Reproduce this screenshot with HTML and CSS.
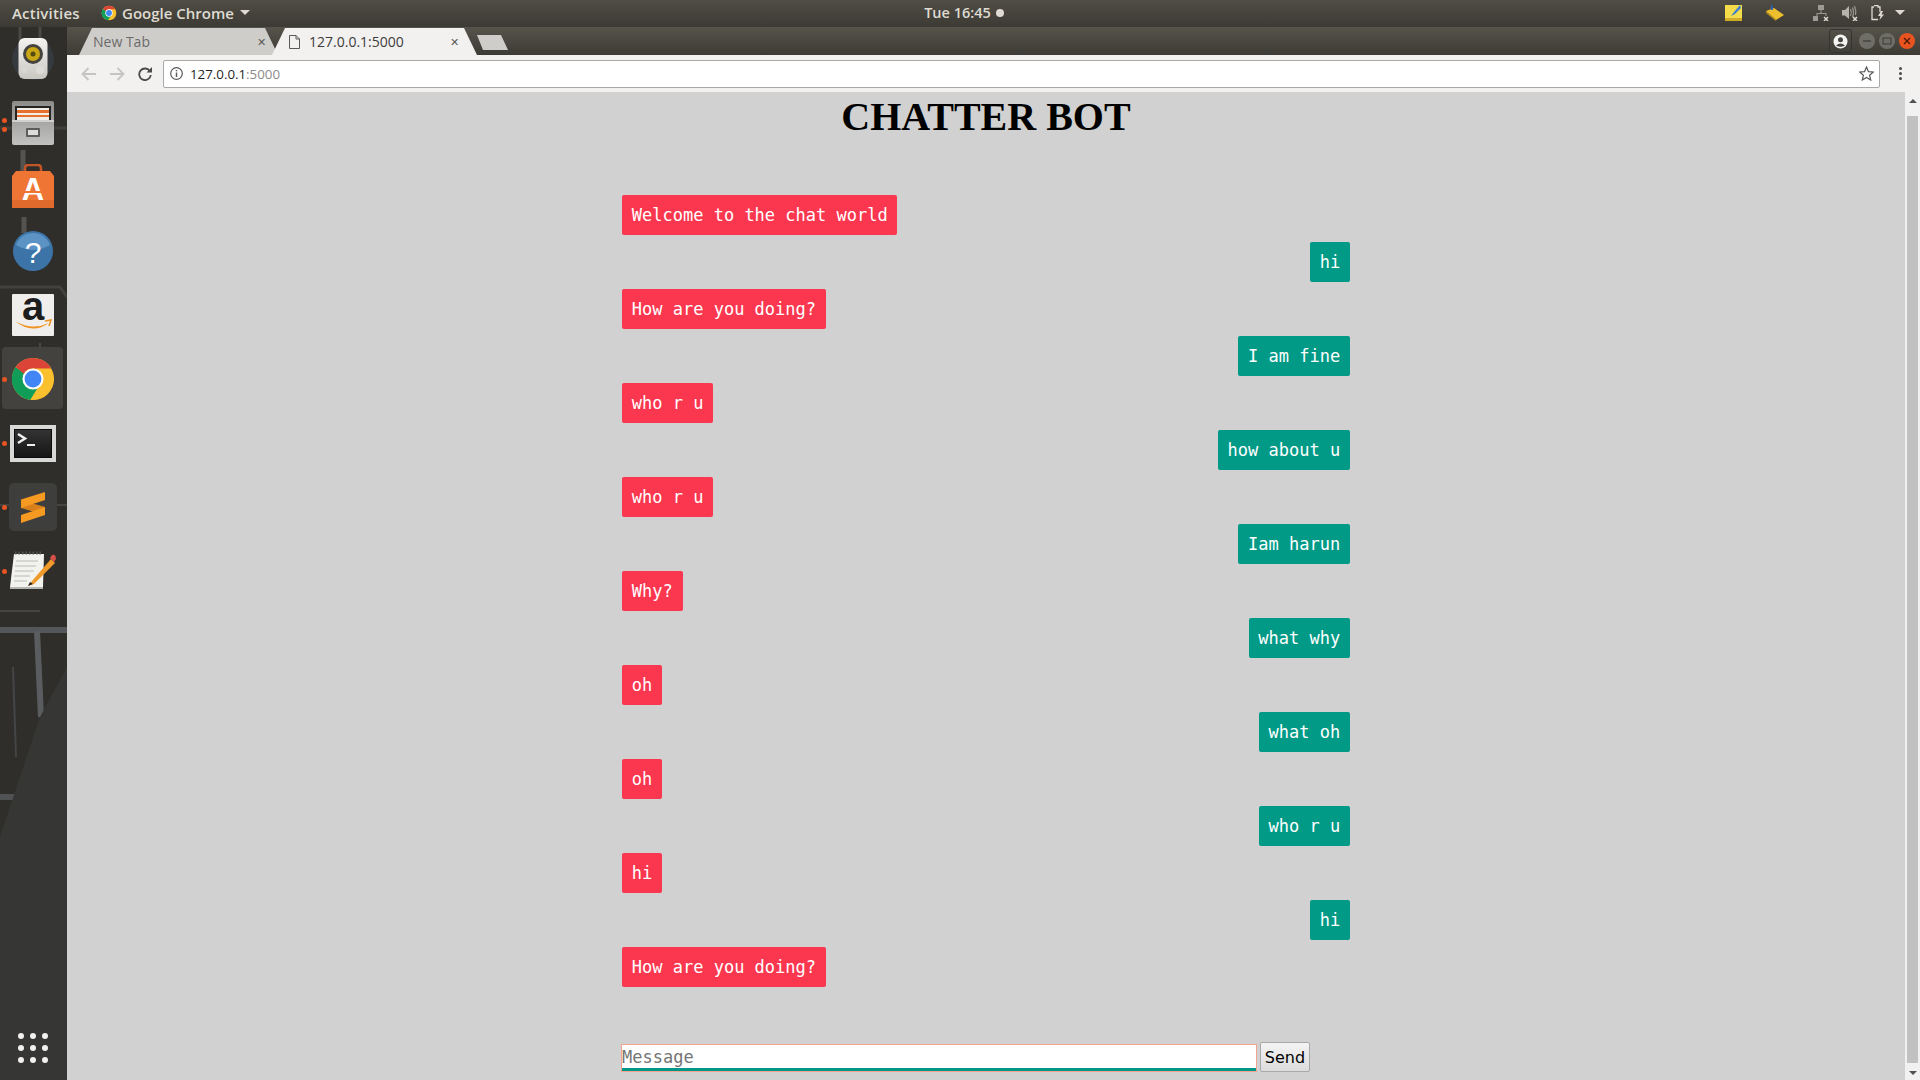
FILE: index.html
```html
<!DOCTYPE html>
<html lang="en">
<head>
    <meta charset="UTF-8">
    <title>127.0.0.1:5000</title>
    <link rel="stylesheet" href="styles.css">
</head>
<body>
    <svg class="defs" width="0" height="0">
        <linearGradient id="metal" x1="0" y1="0" x2="0" y2="1">
            <stop offset="0" stop-color="#8c8c8b"/>
            <stop offset="1" stop-color="#c2c2c1"/>
        </linearGradient>
        <linearGradient id="screen" x1="0" y1="0" x2="0" y2="1">
            <stop offset="0" stop-color="#333"/>
            <stop offset="1" stop-color="#161616"/>
        </linearGradient>
        <linearGradient id="shell" x1="0" y1="0" x2="0" y2="1">
            <stop offset="0" stop-color="#f4f3f0"/>
            <stop offset="1" stop-color="#c9c8c3"/>
        </linearGradient>
        <symbol id="chrome" viewBox="0 0 48 48">
            <circle cx="24" cy="24" r="22" fill="#fbc02d"/>
            <path d="M5.900 11.400 A22 22 0 0 0 21 45.800 L31 30 L17 18 Z" fill="#0f9d58"/>
            <path d="M24 2 A22 22 0 0 1 43.050 13 H24 A11 11 0 0 0 14.400 18.600 L5.900 11.400 A22 22 0 0 1 24 2 Z" fill="#db4437"/>
            <circle cx="24" cy="24" r="11" fill="#fff"/>
            <circle cx="24" cy="24" r="8.800" fill="#4285f4"/>
        </symbol>
    </svg>

    <header class="panel">
        <div class="panel-left">
            <span class="activities">Activities</span>
            <svg class="panel-chrome" width="16" height="16"><use href="#chrome"/></svg>
            <span>Google Chrome</span>
            <span class="caret"></span>
        </div>
        <div class="clock">Tue 16:45<span class="clock-dot"></span></div>
        <div class="tray">
            <svg class="tray-note" width="17" height="17" viewBox="0 0 17 17">
                <rect width="17" height="16" y="1" fill="#f5dc4a"/>
                <rect width="17" height="3" y="14" fill="#d0ab25"/>
                <path d="M15 1 L9 8 L6 12 L10 10 L16 4 Z" fill="#3f7fd0"/>
            </svg>
            <svg class="tray-folder" width="18" height="17" viewBox="0 0 18 17">
                <path d="M0 7 L8 4 L18 11 L10 16 Z" fill="#eebf2d"/>
                <path d="M0 7 L10 16 L10 17 L0 9 Z" fill="#b98e1c"/>
                <path d="M5 1 L6 0 L7 6 L5 6 Z" fill="#2f66b8"/>
            </svg>
            <svg class="tray-net" width="16" height="16" viewBox="0 0 16 16" fill="#9c9a93">
                <rect x="5" y="0" width="6" height="5"/>
                <rect x="0" y="11" width="5" height="5"/>
                <path d="M7.500 5 h1 v3 h5 v3 h-1 v-2 h-8 v2 h-1 v-3 h4 Z"/>
                <path d="M11 12 l4 4 M15 12 l-4 4" stroke="#dfdbd2" stroke-width="1.500"/>
            </svg>
            <svg class="tray-vol" width="16" height="16" viewBox="0 0 16 16" fill="none" stroke="#9c9a93">
                <path d="M0 5 H3 L7 1 V14 L3 10.500 H0 Z" fill="#b5b3ac" stroke="none"/>
                <path d="M8.500 4 Q10 7.500 8.500 11 M10.500 2.500 Q12.500 7.500 10.500 12 M12.500 1 Q14.500 6 13.500 10" stroke-width="1.200"/>
                <path d="M11 12 l4 4 M15 12 l-4 4" stroke="#dfdbd2" stroke-width="1.500"/>
            </svg>
            <svg class="tray-bat" width="14" height="16" viewBox="0 0 14 16" fill="none">
                <path d="M3 0.500 H7 V2 H9 V7 M7 14.500 H1 V2 H3" stroke="#dfdbd2" stroke-width="1.300"/>
                <path d="M10 6 L7 11 H9.500 L8.500 15 L13 9.500 H10.500 L12 6 Z" fill="#dfdbd2"/>
            </svg>
            <span class="caret"></span>
        </div>
    </header>

    <div class="desktop">
        <nav class="dock">
            <svg class="wallpaper" width="67" height="1053" viewBox="0 0 67 1053" fill="none">
                <path d="M20 0 V14 M40 0 V14" stroke="#4a4946" stroke-width="3"/>
                <path d="M0 101 H67" stroke="#403f3c" stroke-width="3"/>
                <path d="M23 123 V150 M24 190 V206" stroke="#55534f" stroke-width="5"/>
                <path d="M0 260 H60 L67 270" stroke="#42413e" stroke-width="3"/>
                <path d="M40 316 V345" stroke="#494845" stroke-width="2"/>
                <path d="M0 478 H67 M0 584 H40" stroke="#454441" stroke-width="2"/>
                <path d="M0 603 H67" stroke="#54575a" stroke-width="6"/>
                <path d="M37 604 L41 690" stroke="#5a5d60" stroke-width="6"/>
                <path d="M13 640 L16 730" stroke="#434547" stroke-width="2"/>
                <path d="M0 770 H15" stroke="#505254" stroke-width="6"/>
                <path d="M67 640 L40 690 L0 810 V1053 H67 Z" fill="#363634" stroke="none"/>
            </svg>

            <div class="dock-slot">
                <svg width="42" height="44" viewBox="0 0 42 44">
                    <circle cx="21" cy="22" r="21" fill="#3b4a55" opacity=".45"/>
                    <rect x="6.500" y="1" width="29" height="41" rx="6" fill="url(#shell)"/>
                    <circle cx="21" cy="17" r="10" fill="#45433e"/>
                    <circle cx="21" cy="17" r="7" fill="#c9a614"/>
                    <circle cx="21" cy="17" r="2.500" fill="#554a10"/>
                    <circle cx="12" cy="33" r="3" fill="#d8d7d3"/>
                    <circle cx="28" cy="33" r="4" fill="#dedcd8"/>
                </svg>
            </div>
            <div class="dock-slot">
                <span class="run-dot run-dot-a"></span><span class="run-dot run-dot-b"></span>
                <svg width="42" height="44" viewBox="0 0 42 44">
                    <rect width="42" height="44" rx="2" fill="url(#metal)"/>
                    <rect x="3" y="5" width="36" height="14" fill="#262421"/>
                    <rect x="5" y="7" width="32" height="12" fill="#f0eee6"/>
                    <rect x="5" y="9" width="32" height="3" fill="#e8702f"/>
                    <rect x="5" y="14" width="32" height="2" fill="#e8702f"/>
                    <rect y="19" width="42" height="2" fill="#d2d1d0"/>
                    <rect x="14" y="27" width="14" height="9" rx="1" fill="#5c5c5b"/>
                    <rect x="16" y="29" width="10" height="5" fill="#dcdcdb"/>
                </svg>
            </div>
            <div class="dock-slot">
                <svg class="lift-2" width="42" height="44" viewBox="0 0 42 44">
                    <path d="M13 10 V4 Q13 1 16 1 H26 Q29 1 29 4 V10" fill="none" stroke="#c45526" stroke-width="2.500"/>
                    <path d="M4 7 H38 L42 12 V44 H0 V12 Z" fill="#ef7534"/>
                    <rect y="36" width="42" height="8" fill="#e0692c"/>
                    <text x="21" y="36" class="bag-letter">A</text>
                    <rect x="12" y="27" width="18" height="2" fill="#ef7534"/>
                </svg>
            </div>
            <div class="dock-slot">
                <svg class="help-icon" width="40" height="40" viewBox="0 0 40 40">
                    <circle cx="20" cy="20" r="20" fill="#3c74a8"/>
                    <path d="M3 14 A18 18 0 0 1 37 14 Q20 24 3 14 Z" fill="#5b93c4"/>
                    <text x="20" y="32" class="help-mark">?</text>
                </svg>
            </div>
            <div class="dock-slot">
                <svg width="42" height="42" viewBox="0 0 42 42">
                    <rect width="42" height="42" rx="1" fill="#efeeec"/>
                    <text x="21" y="26" class="amazon-a">a</text>
                    <path d="M3 27 Q20 41 37 29 Q20 37 3 27 Z" fill="#f0931e"/>
                    <path d="M33 27 L39 26 L37 32" fill="none" stroke="#f0931e" stroke-width="1.500"/>
                </svg>
            </div>
            <div class="dock-slot">
                <span class="active-box"></span>
                <span class="run-dot"></span>
                <svg class="dock-above" width="46" height="46"><use href="#chrome"/></svg>
            </div>
            <div class="dock-slot">
                <span class="run-dot"></span>
                <svg width="46" height="37" viewBox="0 0 46 37">
                    <rect width="46" height="37" fill="#d8d8d6"/>
                    <rect x="4" y="4" width="38" height="29" fill="#0c0c0c"/>
                    <rect x="5" y="5" width="36" height="27" fill="url(#screen)"/>
                    <path d="M8 9 L15 13.500 L8 18" fill="none" stroke="#efefef" stroke-width="2.500"/>
                    <rect x="17" y="19" width="8" height="2" fill="#efefef"/>
                </svg>
            </div>
            <div class="dock-slot">
                <span class="run-dot"></span>
                <svg width="48" height="48" viewBox="0 0 48 48">
                    <rect width="48" height="48" rx="5" fill="#3e3e3d"/>
                    <path d="M12 25 L36 32 V24 L12 17 Z" fill="#d9801d"/>
                    <path d="M12 16.500 L36 9 V17 L12 25 Z" fill="#f79a22"/>
                    <path d="M12 32 L36 24 V32 L12 40 Z" fill="#f79a22"/>
                </svg>
            </div>
            <div class="dock-slot">
                <span class="run-dot"></span>
                <svg class="lift-3" width="46" height="38" viewBox="0 0 46 38">
                    <path d="M4 3 H34 L33 36 H0 Z" fill="#f2f2ee"/>
                    <path d="M0 36 H33 V38 H0 Z" fill="#b4b4b0"/>
                    <path d="M5 2 H33" stroke="#555" stroke-width="3" stroke-dasharray="1.500 2"/>
                    <path d="M6 10 H28 M5 15 H26 M5 20 H24 M4 25 H20 M4 30 H17" stroke="#b9b9b5" stroke-width="1.200"/>
                    <path d="M22 30 L41 8 L45 12 L24 33 L18 35 Z" fill="#f09a2b"/>
                    <path d="M40 7 L42 4 Q44 3 45.500 5 L46 8 L44 11 Z" fill="#d8504a"/>
                    <path d="M18 35 L20 31 L23 33 Z" fill="#222"/>
                </svg>
            </div>
            <div class="app-grid">
                <i></i><i></i><i></i><i></i><i></i><i></i><i></i><i></i><i></i>
            </div>
        </nav>

        <div class="browser">
            <div class="tabstrip">
                <div class="tab">
                    <span class="tab-title">New Tab</span>
                    <span class="tab-close">&#x2715;</span>
                </div>
                <div class="tab tab-active">
                    <svg class="tab-page" width="11" height="14" viewBox="0 0 11 14" fill="none" stroke="#5a5a5a">
                        <path d="M0.500 0.500 H7 L10.500 4 V13.500 H0.500 Z M7 0.500 V4 H10.500"/>
                    </svg>
                    <span class="tab-title">127.0.0.1:5000</span>
                    <span class="tab-close">&#x2715;</span>
                </div>
                <span class="new-tab"></span>
                <div class="window-controls">
                    <div class="profile">
                        <svg width="15" height="15" viewBox="0 0 15 15">
                            <circle cx="7.500" cy="7.500" r="7" fill="#f4f4f2"/>
                            <circle cx="7.500" cy="5.800" r="2.500" fill="#46453f"/>
                            <path d="M3 11.500 Q7.500 7.500 12 11.500 Q7.500 14 3 11.500 Z" fill="#46453f"/>
                        </svg>
                    </div>
                    <span class="win-btn">
                        <svg width="10" height="10" viewBox="0 0 10 10"><path d="M1 5 H9" stroke="#3a3934" stroke-width="1.200"/></svg>
                    </span>
                    <span class="win-btn">
                        <svg width="10" height="10" viewBox="0 0 10 10"><rect x="1" y="2" width="8" height="6" fill="none" stroke="#3a3934"/></svg>
                    </span>
                    <span class="win-btn win-close">
                        <svg width="10" height="10" viewBox="0 0 10 10"><path d="M2 2 L8 8 M8 2 L2 8" stroke="#4a1a08" stroke-width="1.300"/></svg>
                    </span>
                </div>
            </div>

            <div class="toolbar">
                <span class="tool-btn">
                    <svg width="16" height="14" viewBox="0 0 16 14" fill="none" stroke="#c4c4c2" stroke-width="1.800"><path d="M15 7 H2 M7.500 1 L1.500 7 L7.500 13"/></svg>
                </span>
                <span class="tool-btn">
                    <svg width="16" height="14" viewBox="0 0 16 14" fill="none" stroke="#c4c4c2" stroke-width="1.800"><path d="M1 7 H14 M8.500 1 L14.500 7 L8.500 13"/></svg>
                </span>
                <span class="tool-btn">
                    <svg width="14" height="14" viewBox="0 0 14 14" fill="none">
                        <path d="M11.800 4 A5.800 5.800 0 1 0 12.800 8" stroke="#4a4a4a" stroke-width="1.800"/>
                        <path d="M8.500 5.500 H14 V0 Z" fill="#4a4a4a"/>
                    </svg>
                </span>
                <div class="address">
                    <svg width="13" height="13" viewBox="0 0 13 13" fill="none" stroke="#5a5a5a">
                        <circle cx="6.500" cy="6.500" r="5.800" stroke-width="1.200"/>
                        <path d="M6.500 5.500 V10" stroke-width="1.500"/>
                        <path d="M6.500 3 V4.300" stroke-width="1.500"/>
                    </svg>
                    <span class="url">127.0.0.1<span class="url-port">:5000</span></span>
                    <svg class="star" width="15" height="15" viewBox="0 0 15 15" fill="none" stroke="#5a5a5a" stroke-width="1.200">
                        <path d="M7.500 1 L9.400 5.600 L14.300 6 L10.600 9.200 L11.700 14 L7.500 11.400 L3.300 14 L4.400 9.200 L0.700 6 L5.600 5.600 Z"/>
                    </svg>
                </div>
                <div class="menu-btn"><i></i><i></i><i></i></div>
            </div>

            <div class="viewport">
                <main class="page">
                    <h1>CHATTER BOT</h1>
                    <div class="chat">
                        <div class="msg bot"><span>Welcome to the chat world</span></div>
                        <div class="msg user"><span>hi</span></div>
                        <div class="msg bot"><span>How are you doing?</span></div>
                        <div class="msg user"><span>I am fine</span></div>
                        <div class="msg bot"><span>who r u</span></div>
                        <div class="msg user"><span>how about u</span></div>
                        <div class="msg bot"><span>who r u</span></div>
                        <div class="msg user"><span>Iam harun</span></div>
                        <div class="msg bot"><span>Why?</span></div>
                        <div class="msg user"><span>what why</span></div>
                        <div class="msg bot"><span>oh</span></div>
                        <div class="msg user"><span>what oh</span></div>
                        <div class="msg bot"><span>oh</span></div>
                        <div class="msg user"><span>who r u</span></div>
                        <div class="msg bot"><span>hi</span></div>
                        <div class="msg user"><span>hi</span></div>
                        <div class="msg bot"><span>How are you doing?</span></div>
                        <form class="send-form">
                            <input type="text" placeholder="Message">
                            <button type="button">Send</button>
                        </form>
                    </div>
                </main>
                <div class="scrollbar">
                    <span class="arrow-up"></span>
                    <span class="thumb"></span>
                    <span class="arrow-down"></span>
                </div>
            </div>
        </div>
    </div>
</body>
</html>
```

FILE: styles.css
```css
html, body {
    margin: 0;
    padding: 0;
    height: 100%;
    overflow: hidden;
}

body {
    display: flex;
    flex-direction: column;
    font-family: "Open Sans", sans-serif;
    background: #d1d1d1;
}

.defs {
    position: absolute;
}

/* top panel */
.panel {
    height: 27px;
    box-sizing: border-box;
    padding-bottom: 2px;
    flex: none;
    display: grid;
    grid-template-columns: 1fr auto 1fr;
    align-items: center;
    background: linear-gradient(#4f4d44, #3c3a34);
    color: #dfdbd2;
    font-size: 15px;
    font-weight: 600;
}

.panel-left {
    display: flex;
    align-items: center;
    padding-left: 12px;
}

.activities {
    width: 89px;
    letter-spacing: 0.2px;
}

.panel-chrome {
    margin-right: 5px;
}

.caret {
    display: inline-block;
    width: 0;
    height: 0;
    margin-left: 6px;
    border-left: 5px solid transparent;
    border-right: 5px solid transparent;
    border-top: 5px solid #dfdbd2;
}

.clock {
    display: flex;
    align-items: center;
    margin-left: 8px;
    font-size: 14.5px;
}

.clock-dot {
    width: 8px;
    height: 8px;
    margin-left: 5px;
    border-radius: 50%;
    background: #dfdbd2;
}

.tray {
    display: flex;
    align-items: center;
    justify-content: flex-end;
    padding-right: 15px;
}

.tray svg {
    display: block;
}

.tray .caret {
    margin-left: 10px;
}

.tray-note {
    margin-right: 24px;
}

.tray-folder {
    margin-right: 29px;
}

.tray-net,
.tray-vol {
    margin-right: 13px;
}

/* dock */
.desktop {
    flex: 1;
    display: flex;
    min-height: 0;
}

.dock {
    position: relative;
    width: 67px;
    flex: none;
    display: flex;
    flex-direction: column;
    background: #2f2e2b;
}

.wallpaper {
    position: absolute;
    top: 0;
    left: 0;
}

.dock-slot {
    position: relative;
    height: 64px;
    flex: none;
    display: flex;
    align-items: center;
    justify-content: center;
    padding-right: 1px;
}

.lift-2 {
    margin-bottom: 2px;
}

.lift-3 {
    margin-bottom: 3px;
}

.help-icon {
    overflow: visible;
}

.active-box {
    position: absolute;
    left: 2px;
    top: 0;
    width: 61px;
    height: 62px;
    border-radius: 4px;
    background: #43423f;
}

.dock-above {
    position: relative;
}

.run-dot {
    position: absolute;
    left: 2px;
    top: 30px;
    width: 5px;
    height: 5px;
    border-radius: 50%;
    background: #e95420;
}

.run-dot-a {
    top: 27px;
}

.run-dot-b {
    top: 36px;
}

.bag-letter,
.help-mark,
.amazon-a {
    text-anchor: middle;
    font-family: "Liberation Sans", sans-serif;
}

.bag-letter {
    font-size: 31px;
    font-weight: bold;
    fill: #fff;
}

.help-mark {
    font-size: 30px;
    fill: #fff;
}

.amazon-a {
    font-size: 40px;
    font-weight: bold;
    fill: #1d1d1d;
}

.app-grid {
    position: relative;
    margin: auto auto 17px 18px;
    display: grid;
    grid-template-columns: repeat(3, 6px);
    gap: 6px;
}

.app-grid i {
    width: 6px;
    height: 6px;
    border-radius: 50%;
    background: #f2f1f0;
}

/* browser chrome */
.browser {
    flex: 1;
    display: flex;
    flex-direction: column;
    min-width: 0;
}

.tabstrip {
    height: 28px;
    flex: none;
    display: flex;
    align-items: flex-end;
    padding-left: 12px;
    background: linear-gradient(#55534a, #3d3b35);
}

.tab {
    width: 199px;
    height: 27px;
    box-sizing: border-box;
    display: flex;
    align-items: center;
    padding: 0 8px 0 14px;
    margin-right: -6px;
    background: #cfcdca;
    color: #6b6b6b;
    font-size: 14px;
    clip-path: polygon(0 100%, 13px 0, calc(100% - 13px) 0, 100% 100%);
}

.tab-active {
    width: 205px;
    padding: 0 14px 0 17px;
    background: #f2f1f0;
    color: #3c3c3c;
}

.tab-page {
    margin-right: 9px;
    flex: none;
}

.tab-title {
    flex: 1;
}

.tab-close {
    font-size: 11px;
    color: #5a5a5a;
    padding-right: 4px;
}

.new-tab {
    width: 31px;
    height: 15px;
    margin: 0 0 5px 6px;
    background: #cfcdca;
    clip-path: polygon(0 0, 24px 0, 100% 100%, 6px 100%);
}

.window-controls {
    margin-left: auto;
    align-self: center;
    display: flex;
    align-items: center;
    padding-right: 5px;
}

.profile {
    width: 23px;
    height: 24px;
    box-sizing: border-box;
    display: flex;
    align-items: center;
    justify-content: center;
    margin-right: 7px;
    border: 1px solid #35342f;
    border-radius: 3px;
}

.win-btn {
    width: 16px;
    height: 16px;
    display: flex;
    align-items: center;
    justify-content: center;
    margin-left: 4px;
    border-radius: 50%;
    background: #6f6e66;
}

.win-btn:first-of-type {
    margin-left: 0;
}

.win-close {
    background: #e9531f;
}

.toolbar {
    height: 37px;
    flex: none;
    display: flex;
    align-items: center;
    padding-left: 8px;
    box-sizing: border-box;
    background: #f2f1f0;
}

.tool-btn {
    width: 28px;
    display: flex;
    justify-content: center;
}

.address {
    flex: 1;
    height: 28px;
    box-sizing: border-box;
    display: flex;
    align-items: center;
    margin-left: 4px;
    padding: 0 5px 0 6px;
    background: #fff;
    border: 1px solid #a9a9a9;
    border-radius: 2px;
}

.url {
    margin-left: 7px;
    font-size: 13.3px;
    color: #1f1f1f;
}

.url-port {
    color: #8a8a8a;
}

.star {
    margin-left: auto;
}

.menu-btn {
    width: 40px;
    display: flex;
    flex-direction: column;
    align-items: center;
    gap: 2px;
}

.menu-btn i {
    width: 3px;
    height: 3px;
    border-radius: 50%;
    background: #4a4a4a;
}

/* the page itself */
.viewport {
    flex: 1;
    display: flex;
    min-height: 0;
}

.page {
    flex: 1;
    min-width: 0;
    background: #d1d1d1;
}

h1 {
    margin: 0;
    height: 103px;
    padding-top: 1px;
    box-sizing: border-box;
    text-align: center;
    font-family: "Liberation Serif", serif;
    font-size: 40px;
    color: #000;
}

.chat {
    width: 728px;
    margin: 0 auto;
}

.msg {
    display: flex;
    height: 47px;
    font-family: "DejaVu Sans Mono", monospace;
    font-size: 17px;
    color: #fff;
}

.msg span {
    height: 40px;
    padding: 0 9.8px;
    line-height: 41px;
    border-radius: 2px;
}

.bot {
    justify-content: flex-start;
}

.bot span {
    background: #fb374f;
}

.user {
    justify-content: flex-end;
}

.user span {
    background: #009a87;
}

.send-form {
    display: flex;
    align-items: center;
    margin-top: 48px;
}

.send-form input {
    width: 634px;
    height: 26px;
    margin-top: 2px;
    box-sizing: border-box;
    padding: 0;
    border: none;
    border-bottom: 3px solid #009688;
    outline: none;
    box-shadow: 0 0 0 1px #f2a48f;
    background: #fff;
    font-family: "DejaVu Sans Mono", monospace;
    font-size: 17px;
}

.send-form input::placeholder {
    color: #757575;
}

.send-form button {
    width: 50px;
    height: 30px;
    margin-left: 4px;
    padding: 0;
    border: 1px solid #a8a8a8;
    border-radius: 2px;
    background: linear-gradient(#f4f4f4, #dcdcdc);
    font-family: "DejaVu Sans", sans-serif;
    font-size: 16px;
    color: #000;
}

.scrollbar {
    width: 15px;
    flex: none;
    display: flex;
    flex-direction: column;
    align-items: center;
    background: #f1f1f1;
}

.arrow-up,
.arrow-down {
    width: 0;
    height: 0;
    flex: none;
    border-left: 4px solid transparent;
    border-right: 4px solid transparent;
}

.arrow-up {
    margin-top: 7px;
    border-bottom: 4px solid #505050;
}

.arrow-down {
    margin-bottom: 5px;
    border-top: 4px solid #505050;
}

.thumb {
    flex: 1;
    width: 11px;
    margin: 13px 0 8px;
    background: #c1c1c1;
}
```
